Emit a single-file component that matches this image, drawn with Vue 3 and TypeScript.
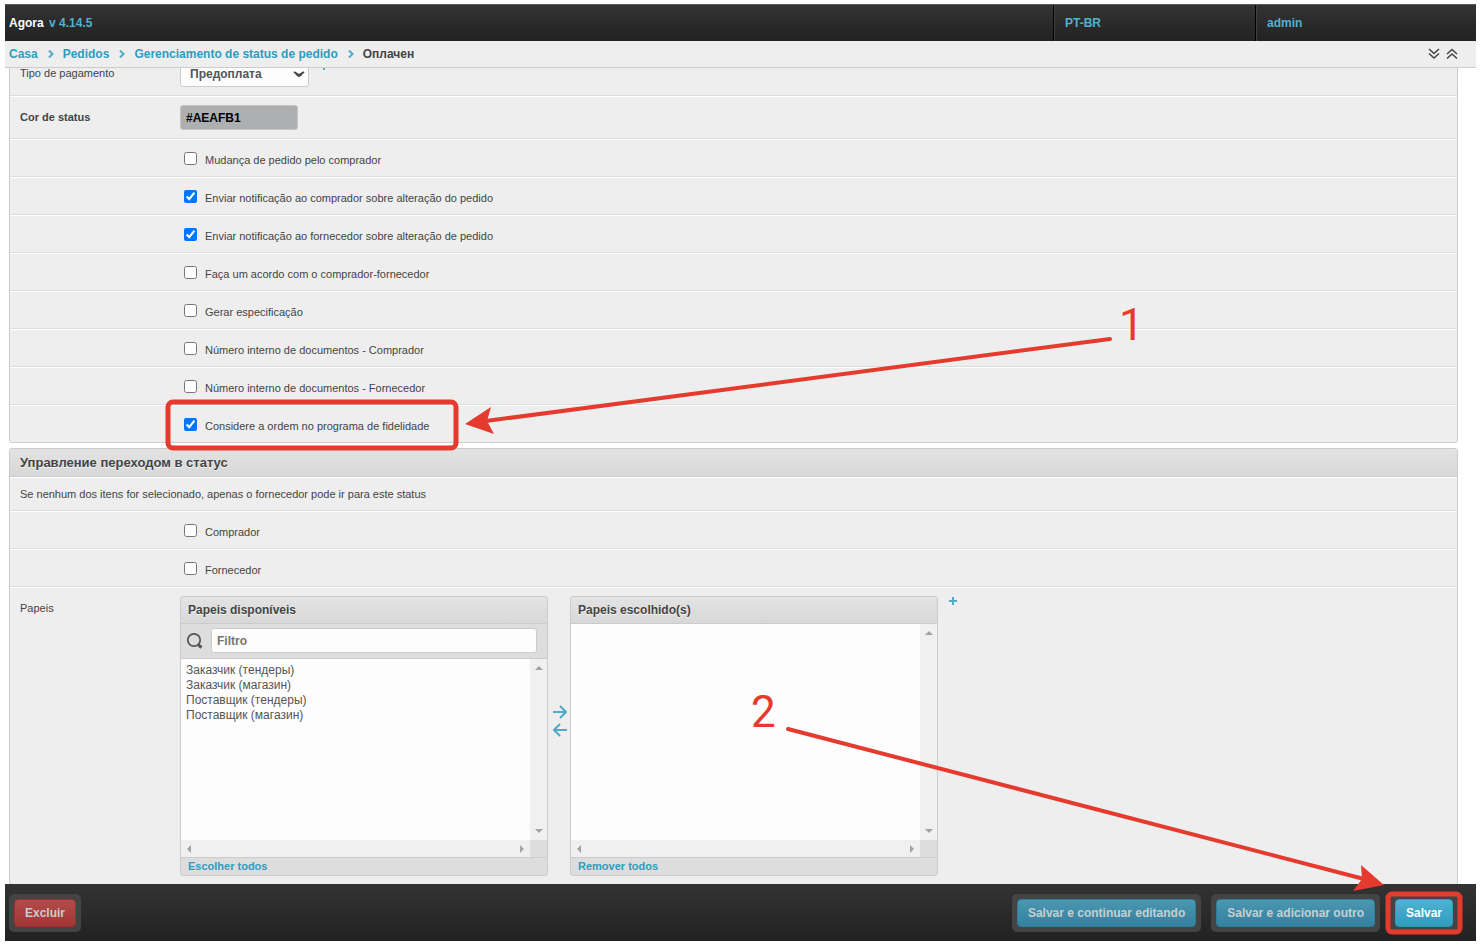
<script setup lang="ts">
import { ref } from 'vue'

interface Option {
  id: string
  label: string
  checked: boolean
}

const crumbs: string[] = ['Casa', 'Pedidos', 'Gerenciamento de status de pedido']

const payment = ref('Предоплата')
const color = ref('#AEAFB1')
const filter = ref('')

const options = ref<Option[]>([
  { id: 'buyer-change', label: 'Mudança de pedido pelo comprador', checked: false },
  { id: 'notify-buyer', label: 'Enviar notificação ao comprador sobre alteração do pedido', checked: true },
  { id: 'notify-supplier', label: 'Enviar notificação ao fornecedor sobre alteração de pedido', checked: true },
  { id: 'agreement', label: 'Faça um acordo com o comprador-fornecedor', checked: false },
  { id: 'specification', label: 'Gerar especificação', checked: false },
  { id: 'number-buyer', label: 'Número interno de documentos - Comprador', checked: false },
  { id: 'number-supplier', label: 'Número interno de documentos - Fornecedor', checked: false },
  { id: 'loyalty', label: 'Considere a ordem no programa de fidelidade', checked: true },
])

const transitions = ref<Option[]>([
  { id: 'buyer', label: 'Comprador', checked: false },
  { id: 'supplier', label: 'Fornecedor', checked: false },
])

const roles: string[] = [
  'Заказчик (тендеры)',
  'Заказчик (магазин)',
  'Поставщик (тендеры)',
  'Поставщик (магазин)',
]
</script>

<template>
  <div class="page">
    <header class="topbar">
      <div class="brand">Agora <a href="#">v 4.14.5</a></div>
      <nav class="user-nav">
        <a href="#">PT-BR</a>
        <a href="#" class="account">admin</a>
      </nav>
    </header>

    <div class="crumb-bar">
      <nav class="crumbs">
        <template v-for="crumb in crumbs" :key="crumb">
          <a href="#">{{ crumb }}</a>
          <svg class="crumb-sep" viewBox="0 0 6 8" aria-hidden="true"><path d="M1 0.5l3.5 3.5-3.5 3.5" /></svg>
        </template>
        <span>Оплачен</span>
      </nav>
      <div class="toggles">
        <button type="button" aria-label="Expandir">
          <svg viewBox="0 0 12 12"><path d="M1 1l5 4.500 5-4.500M1 5.500l5 4.500 5-4.500" /></svg>
        </button>
        <button type="button" aria-label="Recolher">
          <svg viewBox="0 0 12 12"><path d="M1 6l5-4.500 5 4.500M1 10.500l5-4.500 5 4.500" /></svg>
        </button>
      </div>
    </div>

    <main class="content">
      <section class="module scrolled">
        <div class="row">
          <label class="name" for="payment">Tipo de pagamento</label>
          <div class="payment">
            <div class="select-wrap">
              <select id="payment" v-model="payment">
                <option>Предоплата</option>
              </select>
              <svg viewBox="0 0 12 8" aria-hidden="true"><path d="M1 2l5 3 5-3M3 4l3 2 3-2" /></svg>
            </div>
            <button type="button" class="add" aria-label="Adicionar"></button>
          </div>
        </div>
        <div class="row">
          <label class="name strong" for="color">Cor de status</label>
          <div><input id="color" v-model="color" class="color" type="text" /></div>
        </div>
        <div v-for="o in options" :key="o.id" class="row check-row">
          <label class="check">
            <input v-model="o.checked" type="checkbox" /><span>{{ o.label }}</span>
          </label>
        </div>
      </section>

      <section class="module">
        <h2>Управление переходом в статус</h2>
        <p class="row note">Se nenhum dos itens for selecionado, apenas o fornecedor pode ir para este status</p>
        <div v-for="o in transitions" :key="o.id" class="row check-row">
          <label class="check">
            <input v-model="o.checked" type="checkbox" /><span>{{ o.label }}</span>
          </label>
        </div>
        <div class="row">
          <label class="name" for="roles-available">Papeis</label>
          <div class="picker">
            <div class="box">
              <h3>Papeis disponíveis</h3>
              <div class="filter">
                <svg viewBox="0 0 16 16" aria-hidden="true">
                  <circle cx="7" cy="7" r="6.200" />
                  <path d="M11.500 12l3 2.500" class="handle" />
                </svg>
                <input v-model="filter" type="text" placeholder="Filtro" aria-label="Filtro" />
              </div>
              <div class="list">
                <select id="roles-available" multiple>
                  <option v-for="r in roles" :key="r">{{ r }}</option>
                </select>
                <div class="vbar"><i class="up"></i><i class="down"></i></div>
                <div class="hbar"><i class="left"></i><i class="right"></i></div>
              </div>
              <a href="#" class="all">Escolher todos</a>
            </div>
            <div class="movers">
              <button type="button" aria-label="Adicionar papel">
                <svg viewBox="0 0 14 14"><path d="M0 7h13M7 1l6 6-6 6" /></svg>
              </button>
              <button type="button" aria-label="Remover papel">
                <svg viewBox="0 0 14 14"><path d="M14 7H1M7 1L1 7l6 6" /></svg>
              </button>
            </div>
            <div class="box">
              <h3>Papeis escolhido(s)</h3>
              <div class="list">
                <select multiple aria-label="Papeis escolhido(s)"></select>
                <div class="vbar"><i class="up"></i><i class="down"></i></div>
                <div class="hbar"><i class="left"></i><i class="right"></i></div>
              </div>
              <a href="#" class="all">Remover todos</a>
            </div>
            <button type="button" class="add" aria-label="Adicionar"></button>
          </div>
        </div>
      </section>
    </main>

    <footer class="actions">
      <div class="slot"><button type="button" class="danger">Excluir</button></div>
      <div class="group">
        <div class="slot"><button type="button">Salvar e continuar editando</button></div>
        <div class="slot"><button type="button">Salvar e adicionar outro</button></div>
        <div class="slot"><button type="button" class="primary">Salvar</button></div>
      </div>
    </footer>

    <svg class="notes" width="1481" height="946" viewBox="0 0 1481 946">
      <rect x="168" y="402" width="288" height="46" rx="5" />
      <rect x="1388" y="894" width="72" height="38" rx="4" />
      <path class="line" d="M1110 339L486 421M788 729l576 150" />
      <path class="head" d="M465 424l26-17-4 14 7 13zM1384 885l-23-20 1 14-9 12z" />
      <text x="1119" y="340">1</text>
      <text x="751" y="727">2</text>
    </svg>
  </div>
</template>

<style>
body {
  margin: 0;
  background: #fff;
}
</style>

<style scoped>
* {
  box-sizing: border-box;
}
.page {
  position: relative;
  display: flex;
  flex-direction: column;
  height: 100vh;
  padding: 4px 5px 5px;
  overflow: hidden;
  font: 11px/16px "Liberation Sans", Arial, sans-serif;
  color: #444;
}
a {
  color: #309bbf;
  font-weight: bold;
  text-decoration: none;
}
button,
input,
select {
  font-family: inherit;
}
button {
  padding: 0;
  border: 0;
  background: none;
}
.topbar {
  display: flex;
  flex: none;
  height: 37px;
  border-top: 1px solid #5a5a5f;
  background: linear-gradient(#333, #222);
  font-size: 12px;
  font-weight: bold;
  line-height: 36px;
  color: #fff;
}
.brand {
  flex: 1;
  padding-left: 4px;
}
.topbar a {
  color: #4fb2d3;
}
.brand a {
  margin-left: 2px;
}
.user-nav {
  display: flex;
}
.user-nav a {
  width: 202px;
  padding-left: 11px;
  border-left: 1px solid #000;
  box-shadow: inset 1px 0 #404040;
}
.user-nav .account {
  width: 221px;
}
.crumb-bar {
  display: flex;
  flex: none;
  justify-content: space-between;
  align-items: center;
  height: 27px;
  padding: 0 18px 0 4px;
  border-bottom: 1px solid #ccc;
  background: #eee;
  font-size: 12px;
}
.crumbs {
  display: flex;
  align-items: center;
  font-weight: bold;
}
.crumb-sep {
  width: 6px;
  height: 8px;
  margin: 0 9px 0 10px;
  fill: none;
  stroke: #4fabc9;
  stroke-width: 2;
}
.toggles {
  display: flex;
  gap: 6px;
}
.toggles svg {
  display: block;
  width: 12px;
  height: 12px;
  fill: none;
  stroke: #444;
  stroke-width: 1.6;
}
.content {
  flex: 1;
  min-height: 0;
  padding: 0 18px 0 4px;
  overflow: hidden;
}
.module {
  margin-bottom: 5px;
  border: 1px solid #ccc;
  border-radius: 3px;
  background: #eee;
}
.scrolled {
  margin-top: -17px;
}
.row {
  display: grid;
  grid-template-columns: 160px 1fr;
  align-items: start;
  margin: 0;
  padding: 8px 10px;
  border-top: 1px solid #fff;
  border-bottom: 1px solid #ddd;
}
.row:last-child {
  border-bottom: 0;
}
.name {
  padding-top: 4px;
}
.strong {
  font-weight: bold;
}
.check-row {
  height: 38px;
}
.check-row:last-child {
  height: 37px;
}
.check {
  display: flex;
  grid-column: 2;
  justify-self: start;
  align-items: flex-start;
  gap: 8px;
  padding: 4px 0 0 4px;
}
.check input {
  width: 13px;
  height: 13px;
  margin: 0;
}
.note {
  display: block;
}
.payment {
  display: flex;
  gap: 10px;
}
.select-wrap {
  position: relative;
}
.select-wrap select {
  display: block;
  width: 129px;
  height: 26px;
  padding: 0 9px;
  border: 1px solid #ccc;
  border-radius: 3px;
  appearance: none;
  background: #fdfdfd;
  font-size: 12px;
  font-weight: bold;
  color: #555;
}
.select-wrap svg {
  position: absolute;
  top: 9px;
  right: 4px;
  width: 12px;
  height: 8px;
  fill: none;
  stroke: #444;
  stroke-width: 2;
  pointer-events: none;
}
.color {
  display: block;
  width: 118px;
  height: 25px;
  padding: 0 5px;
  border: 1px solid #c4c4c4;
  border-radius: 3px;
  background: #aeafb1;
  font-size: 12px;
  font-weight: bold;
  color: #000;
}
.add {
  flex: none;
  width: 10px;
  height: 10px;
  background:
    linear-gradient(#4fabc9, #4fabc9) center / 8px 2px no-repeat,
    linear-gradient(#4fabc9, #4fabc9) center / 2px 8px no-repeat;
}
h2,
h3 {
  margin: 0;
  background: linear-gradient(#e3e3e3, #d8d8d8);
  border-bottom: 1px solid #ccc;
  text-shadow: 0 1px #f5f5f5;
}
h2 {
  padding: 0 10px;
  border-radius: 3px 3px 0 0;
  font-size: 13px;
  line-height: 27px;
}
h3 {
  padding: 0 7px;
  font-size: 12px;
  line-height: 26px;
}
.picker {
  display: flex;
  align-items: flex-start;
}
.picker .add {
  margin-left: 10px;
}
.box {
  display: flex;
  flex-direction: column;
  width: 368px;
  height: 280px;
  border: 1px solid #ccc;
  border-radius: 3px;
  overflow: hidden;
  background: #ddd;
}
.filter {
  display: flex;
  align-items: center;
  gap: 8px;
  height: 35px;
  padding: 0 10px 1px 6px;
  border-bottom: 1px solid #ccc;
}
.filter svg {
  width: 16px;
  height: 16px;
  flex: none;
  fill: none;
  stroke: #555;
  stroke-width: 1.7;
}
.filter .handle {
  stroke-width: 3;
}
.filter input {
  flex: 1;
  min-width: 0;
  height: 25px;
  padding: 0 5px;
  border: 1px solid #ccc;
  border-radius: 3px;
  background: #fdfdfd;
  font-size: 12px;
  font-weight: bold;
}
.filter input::placeholder {
  color: #757575;
}
.list {
  display: grid;
  flex: 1;
  grid-template-columns: 1fr 17px;
  grid-template-rows: 1fr 17px;
  min-height: 0;
}
.list select {
  width: 100%;
  height: 100%;
  padding: 4px 3px;
  border: 0;
  border-radius: 0;
  overflow: hidden;
  background: #fdfdfd;
  font-size: 12px;
  color: #555;
}
.list option {
  min-height: 15px;
  padding: 0 2px;
  line-height: 15px;
}
.vbar,
.hbar {
  display: flex;
  justify-content: space-between;
  align-items: center;
  background: #f0f0f0;
}
.vbar {
  flex-direction: column;
  padding: 7px 0;
}
.hbar {
  padding: 0 6px;
}
.vbar i,
.hbar i {
  border: 4px solid transparent;
}
.vbar .up {
  border-top: 0;
  border-bottom-color: #a3a3a3;
}
.vbar .down {
  border-bottom: 0;
  border-top-color: #a3a3a3;
}
.hbar .left {
  border-left: 0;
  border-right-color: #a3a3a3;
}
.hbar .right {
  border-right: 0;
  border-left-color: #a3a3a3;
}
.all {
  padding: 0 7px;
  border-top: 1px solid #ccc;
  line-height: 17px;
}
.movers {
  display: flex;
  flex-direction: column;
  align-self: center;
  gap: 4px;
  width: 22px;
  padding: 0 3px 0 5px;
  margin-top: -30px;
}
.movers svg {
  display: block;
  width: 14px;
  height: 14px;
  fill: none;
  stroke: #4fabc9;
  stroke-width: 2;
}
.actions {
  display: flex;
  flex: none;
  justify-content: space-between;
  align-items: center;
  height: 57px;
  padding: 0 18px 0 4px;
  background: linear-gradient(#333, #222);
}
.group {
  display: flex;
  gap: 10px;
}
.slot {
  padding: 5px;
  border-radius: 5px;
  background: #444;
}
.slot button {
  display: block;
  height: 28px;
  padding: 0 10px;
  border: 1px solid #2b7f9c;
  border-radius: 4px;
  background: linear-gradient(#4a97b1, #34819f);
  font-size: 12px;
  font-weight: bold;
  color: #c9cdcf;
}
.slot .danger {
  border-color: #9c2f2f;
  background: linear-gradient(#b44c4c, #a03535);
}
.slot .primary {
  border-color: #309bbf;
  background: linear-gradient(#4fb2d3, #309bbf);
  color: #fff;
}
.notes {
  position: absolute;
  top: 0;
  left: 0;
  pointer-events: none;
  fill: none;
  stroke: #e53b2e;
  stroke-width: 5;
}
.notes .line {
  stroke-width: 4;
  stroke-linecap: round;
}
.notes .head,
.notes text {
  fill: #e53b2e;
  stroke: none;
}
.notes text {
  font-family: Roboto, Arial, sans-serif;
  font-size: 44px;
}
</style>
